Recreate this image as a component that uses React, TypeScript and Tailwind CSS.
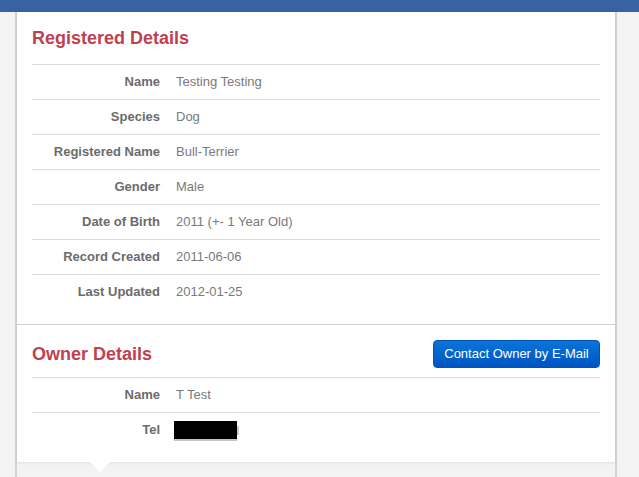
const registered = [
  ["Name", "Testing Testing"],
  ["Species", "Dog"],
  ["Registered Name", "Bull-Terrier"],
  ["Gender", "Male"],
  ["Date of Birth", "2011 (+- 1 Year Old)"],
  ["Record Created", "2011-06-06"],
  ["Last Updated", "2012-01-25"],
];

const Row = ({ label, children, last = false }) => (
  <div
    className={`flex h-[35px] items-center border-t border-[#dcdcdc] ${last ? "" : ""}`}
  >
    <div className="w-[128px] text-right text-[13px] font-bold text-[#6b6b6b]">
      {label}
    </div>
    <div className="ml-[16px] text-[13px] text-[#7a7a7a]">{children}</div>
  </div>
);

export default function App() {
  return (
    <div
      className="flex min-h-screen flex-col bg-[#f3f3f3]"
      style={{ fontFamily: '"Liberation Sans", Arial, sans-serif' }}
    >
      <div className="h-[12px] bg-[#3763a3]" />
      <div className="ml-[15px] flex w-[602px] flex-1 flex-col border-x-2 border-[#d3d3d3]">
        <div className="bg-white shadow-[0_1px_3px_rgba(0,0,0,0.08)]">
          <section className="px-[15px] pb-[15px]">
            <div className="flex h-[52px] items-center">
              <h2 className="text-[18px] font-bold text-[#c1404f]">
                Registered Details
              </h2>
            </div>
            {registered.map(([l, v]) => (
              <Row key={l} label={l}>
                {v}
              </Row>
            ))}
          </section>
          <section className="border-t border-[#cfcfcf] px-[15px] pb-[15px]">
            <div className="flex items-center justify-between pt-[15px] pb-[9px]">
              <h2 className="text-[18px] font-bold text-[#c1404f]">
                Owner Details
              </h2>
              <button className="h-[28px] w-[167px] rounded-[4px] border border-[#0052b4] bg-gradient-to-b from-[#0b74da] to-[#0055c1] text-[13px] text-white">
                Contact Owner by E-Mail
              </button>
            </div>
            <Row label="Name">T Test</Row>
            <Row label="Tel">
              <span className="flex items-center">
                <span className="-ml-[2px] block h-[18px] w-[63px] bg-black shadow-[0_2px_0_#c4c4c4]" />
                <span className="block h-[9px] w-[2px] bg-[#c8c8c8]" />
              </span>
            </Row>
          </section>
        </div>
        <div className="relative h-0">
          <div className="absolute left-[73px] top-0 h-0 w-0 border-x-[10px] border-t-[10px] border-x-transparent border-t-white" />
        </div>
      </div>
    </div>
  );
}
